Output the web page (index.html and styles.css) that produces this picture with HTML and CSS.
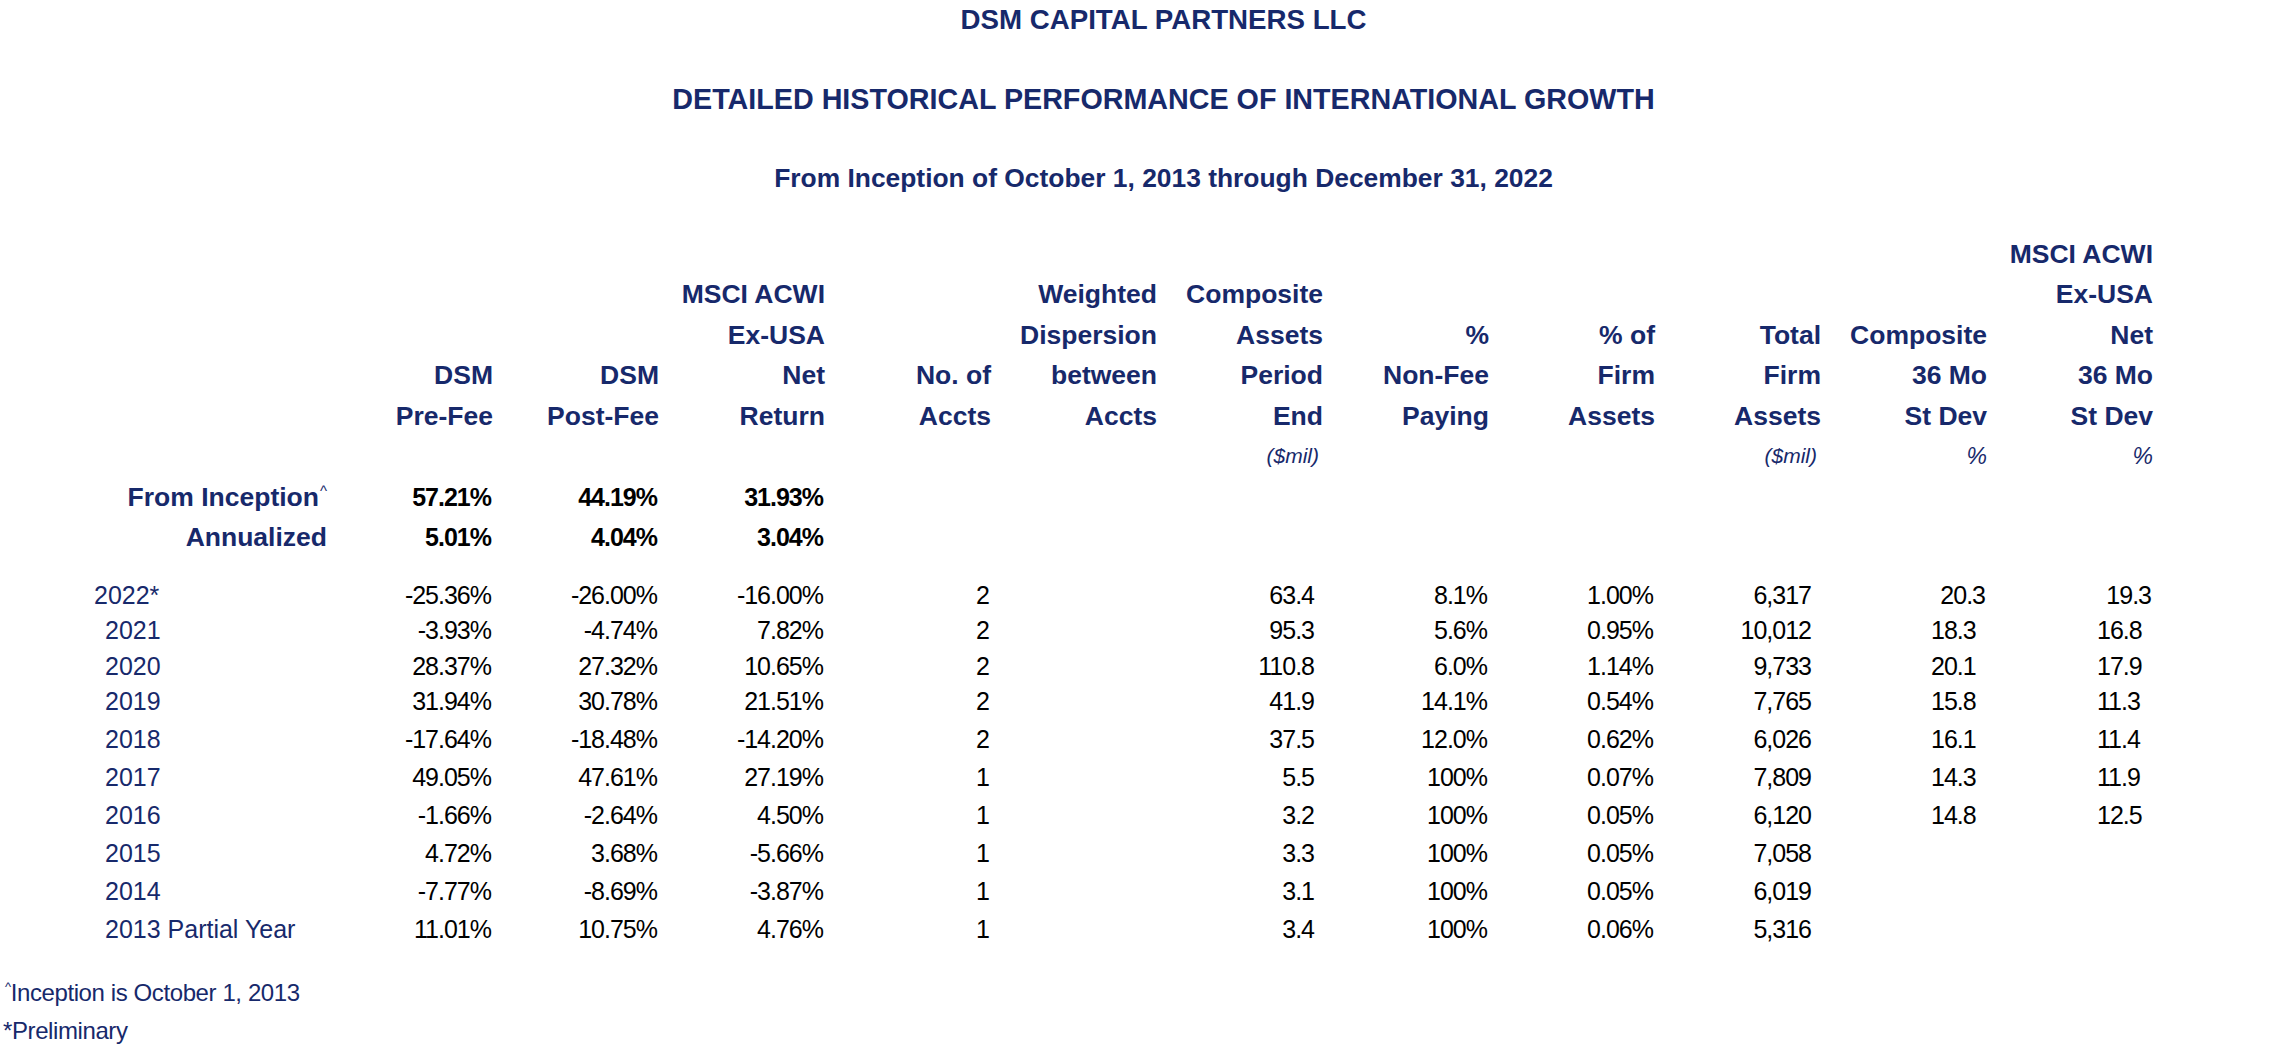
FILE: index.html
```html
<!DOCTYPE html>
<html lang="en">
<head>
<meta charset="utf-8">
<title>DSM Capital Partners LLC - International Growth</title>
<link rel="stylesheet" href="styles.css">
</head>
<body>
<div class="page">
  <header class="titles">
    <h1 class="t1">DSM CAPITAL PARTNERS LLC</h1>
    <h2 class="t2">DETAILED HISTORICAL PERFORMANCE OF INTERNATIONAL GROWTH</h2>
    <h3 class="t3">From Inception of October 1, 2013 through December 31, 2022</h3>
  </header>

  <section class="perf">
    <div class="head">
      <div class="grid hrow">
        <span class="c11">MSCI ACWI</span>
      </div>
      <div class="grid hrow">
        <span class="c3">MSCI ACWI</span>
        <span class="c5">Weighted</span>
        <span class="c6">Composite</span>
        <span class="c11">Ex-USA</span>
      </div>
      <div class="grid hrow">
        <span class="c3">Ex-USA</span>
        <span class="c5">Dispersion</span>
        <span class="c6">Assets</span>
        <span class="c7">%</span>
        <span class="c8">% of</span>
        <span class="c9">Total</span>
        <span class="c10">Composite</span>
        <span class="c11">Net</span>
      </div>
      <div class="grid hrow">
        <span class="c1">DSM</span>
        <span class="c2">DSM</span>
        <span class="c3">Net</span>
        <span class="c4">No. of</span>
        <span class="c5">between</span>
        <span class="c6">Period</span>
        <span class="c7">Non-Fee</span>
        <span class="c8">Firm</span>
        <span class="c9">Firm</span>
        <span class="c10">36 Mo</span>
        <span class="c11">36 Mo</span>
      </div>
      <div class="grid hrow">
        <span class="c1">Pre-Fee</span>
        <span class="c2">Post-Fee</span>
        <span class="c3">Return</span>
        <span class="c4">Accts</span>
        <span class="c5">Accts</span>
        <span class="c6">End</span>
        <span class="c7">Paying</span>
        <span class="c8">Assets</span>
        <span class="c9">Assets</span>
        <span class="c10">St Dev</span>
        <span class="c11">St Dev</span>
      </div>
      <div class="grid hrow">
        <span class="c6 unit">($mil)</span>
        <span class="c9 unit">($mil)</span>
        <span class="c10 unit pc">%</span>
        <span class="c11 unit pc">%</span>
      </div>
    </div>

    <div class="summary">
      <div class="grid srow">
        <span class="lbl">From Inception<sup class="caret">^</sup></span>
        <span class="num">57.21%</span>
        <span class="num">44.19%</span>
        <span class="num">31.93%</span>
      </div>
      <div class="grid srow">
        <span class="lbl">Annualized</span>
        <span class="num">5.01%</span>
        <span class="num">4.04%</span>
        <span class="num">3.04%</span>
      </div>
    </div>

    <div class="years">
      <div class="grid row tight">
        <span class="yr lead">2022*</span>
        <span class="num">-25.36%</span><span class="num">-26.00%</span><span class="num">-16.00%</span>
        <span class="num">2</span><span class="num"></span>
        <span class="num assets">63.4</span><span class="num">8.1%</span><span class="num">1.00%</span>
        <span class="num firm">6,317</span>
        <span class="num">20.3</span><span class="num">19.3</span>
      </div>
      <div class="grid row tight">
        <span class="yr">2021</span>
        <span class="num">-3.93%</span><span class="num">-4.74%</span><span class="num">7.82%</span>
        <span class="num">2</span><span class="num"></span>
        <span class="num assets">95.3</span><span class="num">5.6%</span><span class="num">0.95%</span>
        <span class="num firm">10,012</span>
        <span class="num lft">18.3</span><span class="num lft">16.8</span>
      </div>
      <div class="grid row tight">
        <span class="yr">2020</span>
        <span class="num">28.37%</span><span class="num">27.32%</span><span class="num">10.65%</span>
        <span class="num">2</span><span class="num"></span>
        <span class="num assets">110.8</span><span class="num">6.0%</span><span class="num">1.14%</span>
        <span class="num firm">9,733</span>
        <span class="num lft">20.1</span><span class="num lft">17.9</span>
      </div>
      <div class="grid row tight">
        <span class="yr">2019</span>
        <span class="num">31.94%</span><span class="num">30.78%</span><span class="num">21.51%</span>
        <span class="num">2</span><span class="num"></span>
        <span class="num assets">41.9</span><span class="num">14.1%</span><span class="num">0.54%</span>
        <span class="num firm">7,765</span>
        <span class="num lft">15.8</span><span class="num lft">11.3</span>
      </div>
      <div class="grid row">
        <span class="yr">2018</span>
        <span class="num">-17.64%</span><span class="num">-18.48%</span><span class="num">-14.20%</span>
        <span class="num">2</span><span class="num"></span>
        <span class="num assets">37.5</span><span class="num">12.0%</span><span class="num">0.62%</span>
        <span class="num firm">6,026</span>
        <span class="num lft">16.1</span><span class="num lft">11.4</span>
      </div>
      <div class="grid row">
        <span class="yr">2017</span>
        <span class="num">49.05%</span><span class="num">47.61%</span><span class="num">27.19%</span>
        <span class="num">1</span><span class="num"></span>
        <span class="num assets">5.5</span><span class="num">100%</span><span class="num">0.07%</span>
        <span class="num firm">7,809</span>
        <span class="num lft">14.3</span><span class="num lft">11.9</span>
      </div>
      <div class="grid row">
        <span class="yr">2016</span>
        <span class="num">-1.66%</span><span class="num">-2.64%</span><span class="num">4.50%</span>
        <span class="num">1</span><span class="num"></span>
        <span class="num assets">3.2</span><span class="num">100%</span><span class="num">0.05%</span>
        <span class="num firm">6,120</span>
        <span class="num lft">14.8</span><span class="num lft">12.5</span>
      </div>
      <div class="grid row">
        <span class="yr">2015</span>
        <span class="num">4.72%</span><span class="num">3.68%</span><span class="num">-5.66%</span>
        <span class="num">1</span><span class="num"></span>
        <span class="num assets">3.3</span><span class="num">100%</span><span class="num">0.05%</span>
        <span class="num firm">7,058</span>
        <span class="num"></span><span class="num"></span>
      </div>
      <div class="grid row">
        <span class="yr">2014</span>
        <span class="num">-7.77%</span><span class="num">-8.69%</span><span class="num">-3.87%</span>
        <span class="num">1</span><span class="num"></span>
        <span class="num assets">3.1</span><span class="num">100%</span><span class="num">0.05%</span>
        <span class="num firm">6,019</span>
        <span class="num"></span><span class="num"></span>
      </div>
      <div class="grid row">
        <span class="yr">2013 Partial Year</span>
        <span class="num">11.01%</span><span class="num">10.75%</span><span class="num">4.76%</span>
        <span class="num">1</span><span class="num"></span>
        <span class="num assets">3.4</span><span class="num">100%</span><span class="num">0.06%</span>
        <span class="num firm">5,316</span>
        <span class="num"></span><span class="num"></span>
      </div>
    </div>
  </section>

  <footer class="notes">
    <p><sup class="caret small">^</sup>Inception is October 1, 2013</p>
    <p>*Preliminary</p>
  </footer>
</div>
</body>
</html>
```

FILE: styles.css
```css
* {
  box-sizing: border-box;
  margin: 0;
  padding: 0;
}

html, body {
  background: #ffffff;
}

body {
  width: 2283px;
  font-family: "Liberation Sans", Arial, sans-serif;
  color: #000000;
}

.page {
  width: 2283px;
}

/* ---------- Titles ---------- */
.titles {
  padding-left: 44px;
  text-align: center;
  color: #17296b;
}

.titles h1,
.titles h2,
.titles h3 {
  font-weight: 700;
  line-height: 40px;
  margin-bottom: 39px;
  white-space: nowrap;
}

.t1 { font-size: 27.7px; }
.t2 { font-size: 28.7px; }
.t3 { font-size: 26.4px; margin-bottom: 0 !important; }

/* ---------- Table grid ---------- */
.grid {
  display: grid;
  grid-template-columns: 328px repeat(11, 166px);
}

.head {
  margin-top: 35.6px;
  color: #17296b;
  font-weight: 700;
  font-size: 26.5px;
}

.hrow {
  height: 40.5px;
  line-height: 40.5px;
}

.hrow > span {
  grid-row: 1;
  text-align: right;
  white-space: nowrap;
  padding-right: 1px;
}

.c1 { grid-column: 2; }
.c2 { grid-column: 3; }
.c3 { grid-column: 4; }
.c4 { grid-column: 5; }
.c5 { grid-column: 6; }
.c6 { grid-column: 7; }
.c7 { grid-column: 8; }
.c8 { grid-column: 9; }
.c9 { grid-column: 10; }
.c10 { grid-column: 11; }
.c11 { grid-column: 12; }

.hrow > .unit {
  font-style: italic;
  font-weight: 400;
  font-size: 21px;
  padding-right: 5px;
}

.hrow > .unit.pc {
  font-size: 23px;
  padding-right: 1px;
}

/* ---------- Summary rows ---------- */
.srow {
  height: 40px;
  line-height: 40px;
}

.srow .lbl {
  color: #17296b;
  font-weight: 700;
  font-size: 26.5px;
  text-align: right;
  white-space: nowrap;
  padding-right: 1px;
}

.srow .num {
  font-weight: 700;
}

.caret {
  font-size: 15px;
  line-height: 0;
  vertical-align: 10px;
  font-weight: 400;
  margin-left: 1px;
}

/* ---------- Numbers ---------- */
.num {
  font-size: 25px;
  letter-spacing: -1px;
  text-align: right;
  padding-right: 3px;
  white-space: nowrap;
}

.num.assets { padding-right: 10px; }
.num.firm { padding-right: 11px; }

.num.lft {
  text-align: left;
  padding-left: 109px;
  padding-right: 0;
}

/* ---------- Year rows ---------- */
.years {
  margin-top: 21px;
}

.row {
  height: 38px;
  line-height: 38px;
}

.row.tight {
  height: 35.5px;
  line-height: 35.5px;
}

.yr {
  color: #17296b;
  font-size: 25px;
  text-align: left;
  padding-left: 105px;
  white-space: nowrap;
}

.yr.lead {
  padding-left: 94px;
}

/* ---------- Footnotes ---------- */
.notes {
  margin-top: 26px;
  padding-left: 3px;
  color: #17296b;
  font-size: 24px;
  line-height: 38px;
  letter-spacing: -0.4px;
}

.notes .caret.small {
  font-size: 13px;
  vertical-align: 10px;
  margin-left: 2px;
  margin-right: 0;
}
```
